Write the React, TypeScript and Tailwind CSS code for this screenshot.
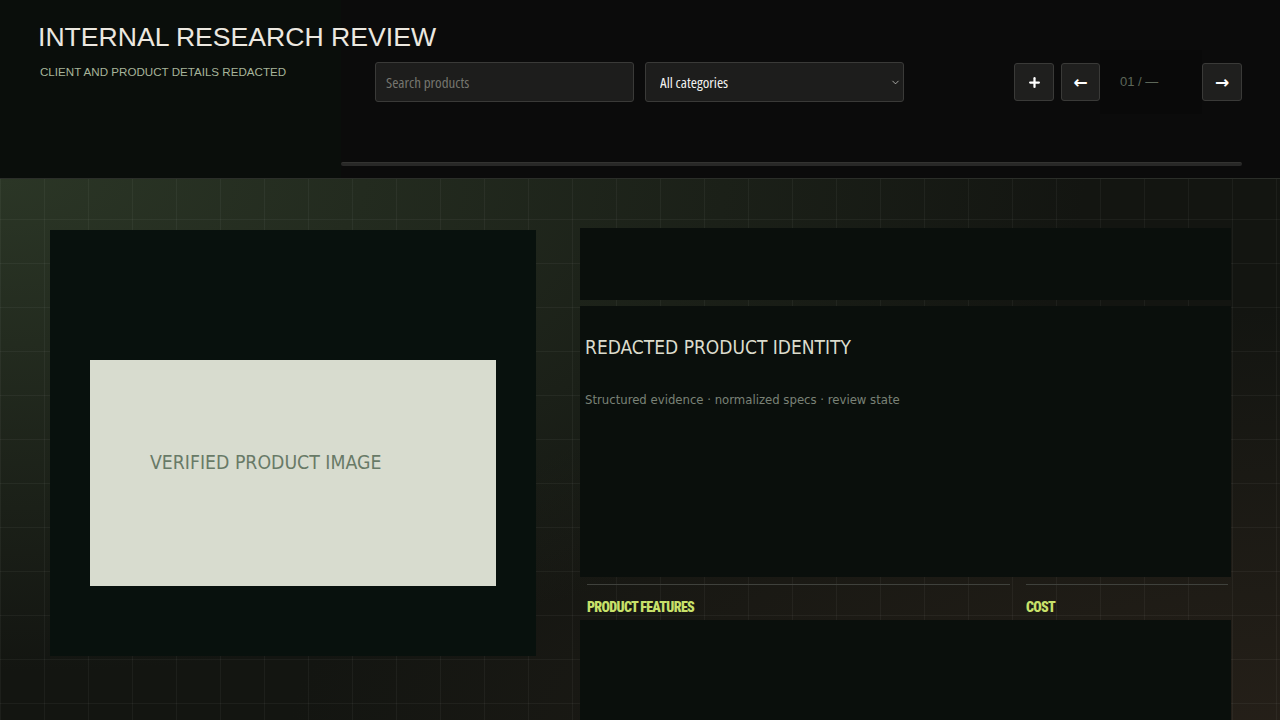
import React, { useState } from 'react';
import { ChevronDown, Plus } from 'lucide-react';

const categories = ['All categories', 'Hardware', 'Software', 'Services'];

export default function App() {
  const [query, setQuery] = useState('');
  const [category, setCategory] = useState(categories[0]);

  return (
    <div className="min-h-screen w-full bg-[#131511] font-['Liberation_Sans',sans-serif]">
      <header className="flex h-[179px] border-b border-[#2b2e29] bg-[#0b0b0b]">
        <div className="relative z-10 w-[341px] shrink-0 bg-[#0a0e0b] pl-[38px] pt-[21px]">
          <h1 className="whitespace-nowrap text-[26.6px] leading-[32px] text-[#ece8e0]">
            INTERNAL RESEARCH REVIEW
          </h1>
          <p className="ml-[2px] mt-[11px] text-[11.6px] leading-[16px] text-[#a7b49a]">
            CLIENT AND PRODUCT DETAILS REDACTED
          </p>
        </div>

        <div className="flex flex-1 flex-col pr-[38px] pt-[62px]">
          <div className="flex h-[40px] items-center pl-[34px]">
            <input
              value={query}
              onChange={(e) => setQuery(e.target.value)}
              placeholder="Search products"
              className="h-[40px] w-[259px] rounded-[3px] border border-[#3a3a38] bg-[#1d1d1c] px-[10px] font-['Open_Sans',sans-serif] text-[15px] text-[#f0f0ee] outline-none [font-stretch:75%] placeholder:text-[#76766f]"
            />
            <div className="relative ml-[11px] w-[259px]">
              <select
                value={category}
                onChange={(e) => setCategory(e.target.value)}
                className="h-[40px] w-full appearance-none rounded-[3px] border border-[#3a3a38] bg-[#1d1d1c] pl-[14px] font-['Open_Sans',sans-serif] text-[15px] text-[#f2f2f0] outline-none [font-stretch:75%]"
              >
                {categories.map((c) => (
                  <option key={c}>{c}</option>
                ))}
              </select>
              <ChevronDown
                size={11}
                strokeWidth={1.6}
                className="pointer-events-none absolute right-[3px] top-[15px] text-[#d8d8d4]"
              />
            </div>

            <div className="flex-1" />

            <button className="flex h-[38px] w-[40px] items-center justify-center rounded-[3px] border border-[#3a3a38] bg-[#1f1f1e] text-white">
              <Plus size={15} strokeWidth={3.6} />
            </button>
            <button className="ml-[7px] flex h-[38px] w-[39px] items-center justify-center rounded-[3px] border border-[#3a3a38] bg-[#1f1f1e] font-['DejaVu_Sans',sans-serif] text-[17px] font-bold leading-none text-white">
              ←
            </button>
            <div className="flex h-[64px] w-[102px] items-center bg-[#090909] pl-[20px] text-[13px] text-[#5d6759]">
              01 / —
            </div>
            <button className="flex h-[38px] w-[40px] items-center justify-center rounded-[3px] border border-[#3a3a38] bg-[#1f1f1e] font-['DejaVu_Sans',sans-serif] text-[17px] font-bold leading-none text-white">
              →
            </button>
          </div>

          <div className="mt-[60px] h-[4px] rounded-full border-t border-[#333331] bg-[#282827]" />
        </div>
      </header>

      <main className="flex min-h-[541px] items-start gap-[44px] bg-[image:linear-gradient(rgba(255,255,255,0.045)_1px,transparent_1px),linear-gradient(90deg,rgba(255,255,255,0.045)_1px,transparent_1px),radial-gradient(ellipse_at_0%_0%,#2b3626_0%,rgba(43,54,38,0)_60%),radial-gradient(ellipse_at_100%_100%,#262019_0%,rgba(38,32,25,0)_55%)] bg-[size:44px_44px,44px_44px,100%_100%,100%_100%] bg-[position:0_40px,0_40px,0_0,0_0] pl-[50px] pt-[49px]">
        <section className="mt-[2px] h-[426px] w-[486px] shrink-0 bg-[#08110d] px-[40px] pt-[130px]">
          <div className="h-[226px] w-[406px] bg-[#d8dccf] pl-[60px] pt-[91px]">
            <span className="block font-['DejaVu_Sans_Condensed','DejaVu_Sans',sans-serif] text-[19.3px] leading-[24px] text-[#687a67] [font-stretch:condensed]">
              VERIFIED PRODUCT IMAGE
            </span>
          </div>
        </section>

        <section className="flex w-[651px] shrink-0 flex-col">
          <div className="h-[72px] bg-[#0a0f0c]" />
          <div className="mt-[6px] h-[271px] bg-[#0a0f0c] pl-[5px] pt-[29px] font-['DejaVu_Sans_Condensed','DejaVu_Sans',sans-serif] [font-stretch:condensed]">
            <h2 className="text-[19px] leading-[24px] text-[#dcdccd]">REDACTED PRODUCT IDENTITY</h2>
            <p className="mt-[33px] text-[13px] leading-[16px] text-[#7a8277]">
              Structured evidence · normalized specs · review state
            </p>
          </div>

          <div className="grid h-[43px] grid-cols-[423px_202px] gap-[16px] pl-[7px] pt-[7px]">
            {['PRODUCT FEATURES', 'COST'].map((label) => (
              <div key={label} className="border-t border-[#3f413c]">
                <div className="mt-[14px] font-['Roboto',sans-serif] text-[14px] font-black leading-[16px] tracking-[-0.05em] text-[#c8e16a] [font-stretch:75%]">
                  {label}
                </div>
              </div>
            ))}
          </div>

          <div className="h-[140px] bg-[#0a0f0c]" />
        </section>
      </main>
    </div>
  );
}
